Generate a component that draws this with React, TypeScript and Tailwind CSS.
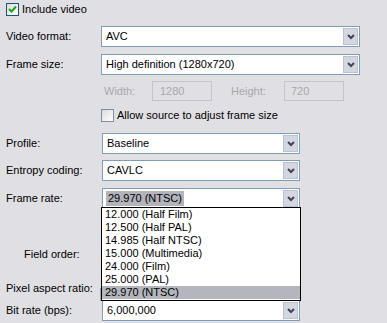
import React from "react";

const font = "font-['Tahoma','Liberation_Sans',sans-serif] text-[11px] leading-none";

function Chevron() {
  return (
    <svg width="8" height="6" viewBox="0 0 8 6">
      <path d="M1 1 L4 4 L7 1" fill="none" stroke="#3c4458" strokeWidth="2" />
    </svg>
  );
}

function Combo({ w, text, sel }: { w: string; text: string; sel?: boolean }) {
  return (
    <div className={`flex h-[21px] ${w} border border-[#7f9db9] bg-white`}>
      <div className="flex flex-1 items-center pl-[3px] text-black">
        {sel ? (
          <span className="bg-[#b3b3bc] px-[2px] py-[2px]">{text}</span>
        ) : (
          <span className="px-[1px]">{text}</span>
        )}
      </div>
      <div className="m-px flex w-[15px] items-center justify-center border border-[#b9c1d6] bg-[#d5d6e0]">
        <Chevron />
      </div>
    </div>
  );
}

function Check({ on }: { on?: boolean }) {
  return (
    <div className="flex h-[13px] w-[13px] items-center justify-center border border-[#1c5180] bg-gradient-to-br from-[#dcdcd7] to-white">
      {on && (
        <svg width="9" height="9" viewBox="0 0 9 9">
          <path d="M1 4 L3.5 6.5 L8 1.5" fill="none" stroke="#21a121" strokeWidth="2" />
        </svg>
      )}
    </div>
  );
}

const rates = [
  "12.000 (Half Film)",
  "12.500 (Half PAL)",
  "14.985 (Half NTSC)",
  "15.000 (Multimedia)",
  "24.000 (Film)",
  "25.000 (PAL)",
  "29.970 (NTSC)",
];

export default function App() {
  return (
    <div className={`relative h-[323px] w-[387px] overflow-hidden bg-[#e0dfe3] pl-[6px] ${font}`}>
      {/* include video */}
      <div className="flex h-[18px] items-center pt-[1px]">
        <Check on />
        <span className="ml-[3px] text-black">Include video</span>
      </div>

      <div className="mt-[8px] flex h-[21px] items-center">
        <span className="w-[95px]">Video format:</span>
        <Combo w="w-[259px]" text="AVC" />
      </div>

      <div className="mt-[7px] flex h-[21px] items-center">
        <span className="w-[95px]">Frame size:</span>
        <Combo w="w-[259px]" text="High definition (1280x720)" />
      </div>

      <div className="mt-[6px] flex h-[20px] items-center pl-[98px] text-[#a9a8ad]">
        <span className="w-[48px]">Width:</span>
        <div className="flex h-[20px] w-[60px] items-center border border-[#c4c3c9] pl-[7px]">1280</div>
        <span className="ml-[19px] w-[53px]">Height:</span>
        <div className="flex h-[20px] w-[60px] items-center border border-[#c4c3c9] pl-[6px]">720</div>
      </div>

      <div className="mt-[5px] flex h-[18px] items-center pl-[95px]">
        <div className="flex h-[13px] w-[13px] border border-[#7d8ea8] bg-gradient-to-br from-[#dcdcd7] to-white" />
        <span className="ml-[3px]">Allow source to adjust frame size</span>
      </div>

      <div className="mt-[9px] flex h-[21px] items-center">
        <span className="w-[96px]">Profile:</span>
        <Combo w="w-[198px]" text="Baseline" />
      </div>

      <div className="mt-[6px] flex h-[21px] items-center">
        <span className="w-[96px]">Entropy coding:</span>
        <Combo w="w-[198px]" text="CAVLC" />
      </div>

      <div className="mt-[7px] flex h-[21px] items-center">
        <span className="w-[96px]">Frame rate:</span>
        <Combo w="w-[198px]" text="29.970 (NTSC)" sel />
      </div>

      <div className="mt-[35px] flex h-[21px] items-center">
        <span className="ml-[18px] w-[78px]">Field order:</span>
      </div>

      <div className="mt-[8px] flex h-[28px]">
        <span className="w-[94px] self-center pt-[2px]">Pixel aspect ratio:</span>
        <div className="h-[13px] w-px self-end bg-[#9fa3ad]" />
      </div>

      <div className="flex h-[19px] items-center">
        <span className="w-[96px]">Bit rate (bps):</span>
        <Combo w="w-[198px] h-[19px]" text="6,000,000" />
      </div>

      {/* open frame rate list */}
      <div className="absolute left-[101px] top-[207px] w-[200px] border border-black bg-white pb-px">
        {rates.map((r, i) => (
          <div
            key={r}
            className={`flex h-[13px] items-center pl-[3px] ${i === rates.length - 1 ? "bg-[#b4b5bd]" : ""}`}
          >
            {r}
          </div>
        ))}
      </div>
    </div>
  );
}
